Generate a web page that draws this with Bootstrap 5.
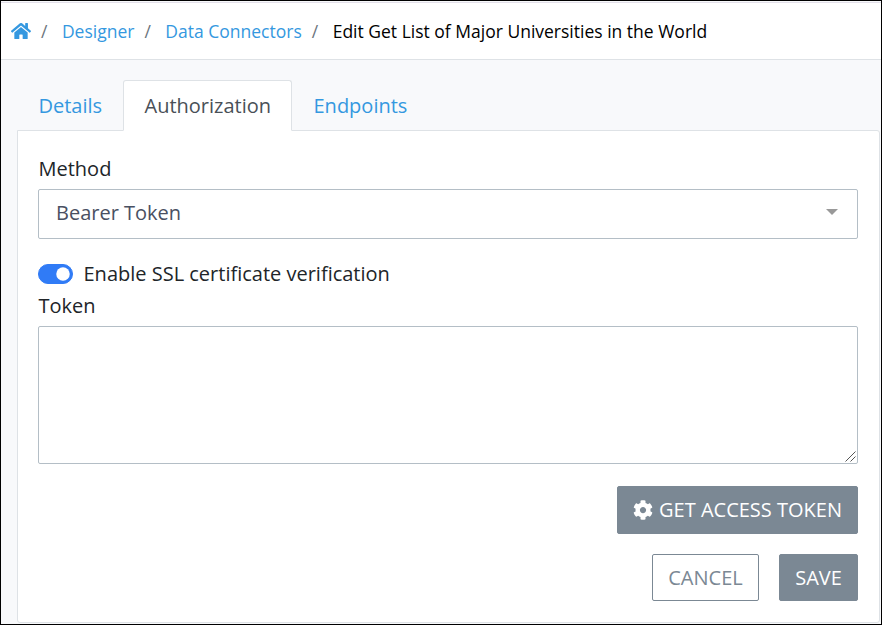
<!DOCTYPE html>
<html lang="en">
<head>
<meta charset="utf-8">
<meta name="viewport" content="width=device-width, initial-scale=1">
<title>Edit Data Connector</title>
<link href="https://cdn.jsdelivr.net/npm/bootstrap@5.3.0/dist/css/bootstrap.min.css" rel="stylesheet">
<style>
body{font-family:"Open Sans","Noto Sans",sans-serif;font-size:20px;line-height:30px;color:#212529;background:#f8f9fb;height:625px;border:1px solid #000;overflow:hidden}
a{color:#3498e0;text-decoration:none}
.topbar{border-top:1px solid #e3e0ea;border-bottom:1px solid #dee2e6;margin-top:1px;padding-left:10px;height:58px}
.breadcrumb{font-size:17.5px;line-height:27px;--bs-breadcrumb-item-padding-x:10px;--bs-breadcrumb-divider-color:#6c757d}
.breadcrumb-item+.breadcrumb-item::before{padding-right:14.5px}
.breadcrumb-item.active{color:#000}
.home-icon{width:20px;height:16px;display:block;margin-top:5px}
.workspace{padding:20px 1px 0 16px}
.nav-tabs{--bs-nav-tabs-border-color:#dee2e6;--bs-nav-tabs-border-radius:3px;--bs-nav-link-color:#3498e0;--bs-nav-tabs-link-active-color:#495057;--bs-nav-link-padding-x:20.5px;border-bottom:0;height:50px}
.nav-tabs .nav-link{height:51px;padding-top:10px;margin-bottom:-1px;position:relative}
.nav-tabs .nav-item:nth-child(1){width:106px}
.nav-tabs .nav-item:nth-child(2){width:169px}
.panel{height:493px;border:1px solid #dee2e6;border-radius:0 3px 3px 3px;background:#fff;padding:23px 21px 0 20px}
.field-label{padding-left:.5px}
.form-select,.form-control{border:1px solid #b4bec6;border-radius:2px;font-size:20px;line-height:30px}
.form-select{height:50px;padding:7px 17px 9px;color:#495062;background-image:none}
.select-wrap{margin:5px 0 20px}
.select-wrap::after{content:"";position:absolute;right:20px;top:20px;border:6px solid transparent;border-top-color:#999;border-bottom:0}
.form-check.form-switch{min-height:30px;padding:0;gap:10.5px;margin-bottom:2px}
.form-switch .form-check-input{width:35px;height:20px;margin:0 0 1px;float:none}
.form-check-input:checked{background-color:#307bf6;border-color:#307bf6}
.token-wrap{margin-top:5px}
.token-box{height:138px;resize:none;display:block}
.grip{position:absolute;right:2px;bottom:2px;pointer-events:none}
.btn{font-size:20px;line-height:30px;border-radius:2px;padding:7px 15px;white-space:nowrap}
.btn-slate{background:#7b8894;border-color:#7b8894;color:#fff}
.btn-line{border-color:#7b8894;color:#7b8894;background:#fff}
.get{width:241px;height:48px}
.gear{margin-right:6px}
.cancel{width:107px;height:47px}
.save{width:79px;height:47px}
.actions-first{margin-top:22px}
.actions-last{margin-top:20px;gap:20px}
</style>
<script src="https://cdn.jsdelivr.net/npm/bootstrap@5.3.0/dist/js/bootstrap.bundle.min.js"></script>
</head>
<body>
<header class="topbar bg-white d-flex align-items-center">
  <nav aria-label="breadcrumb">
    <ol class="breadcrumb mb-0">
      <li class="breadcrumb-item"><a href="#" aria-label="Home"><svg class="home-icon" viewBox="0 0 576 448" preserveAspectRatio="none" fill="currentColor"><path d="M280 116 96 268v164a16 16 0 0 0 16 16h112a16 16 0 0 0 16-16v-96a16 16 0 0 1 16-16h64a16 16 0 0 1 16 16v96a16 16 0 0 0 16 16h112a16 16 0 0 0 16-16V268L295 116a12 12 0 0 0-15 0zM571 219l-83-69V12a12 12 0 0 0-12-12h-56a12 12 0 0 0-12 12v72l-89-74a48 48 0 0 0-61 0L4 219a12 12 0 0 0-2 17l26 31a12 12 0 0 0 17 2L280 76a12 12 0 0 1 15 0l235 193a12 12 0 0 0 17-2l26-31a12 12 0 0 0-2-17z"/></svg></a></li>
      <li class="breadcrumb-item"><a href="#">Designer</a></li>
      <li class="breadcrumb-item"><a href="#">Data Connectors</a></li>
      <li class="breadcrumb-item active" aria-current="page">Edit Get List of Major Universities in the World</li>
    </ol>
  </nav>
</header>
<main class="workspace">
  <ul class="nav nav-tabs flex-nowrap">
    <li class="nav-item"><a class="nav-link" href="#">Details</a></li>
    <li class="nav-item"><a class="nav-link active" href="#">Authorization</a></li>
    <li class="nav-item"><a class="nav-link" href="#">Endpoints</a></li>
  </ul>
  <form class="panel">
    <label class="field-label d-block" for="method">Method</label>
    <div class="select-wrap position-relative">
      <select class="form-select" id="method"><option>Bearer Token</option></select>
    </div>
    <div class="form-check form-switch d-flex align-items-center">
      <input class="form-check-input" type="checkbox" role="switch" id="ssl" checked>
      <label class="form-check-label" for="ssl">Enable SSL certificate verification</label>
    </div>
    <label class="field-label d-block" for="token">Token</label>
    <div class="token-wrap position-relative">
      <textarea class="form-control token-box" id="token"></textarea>
      <svg class="grip" width="11" height="11" viewBox="0 0 11 11" stroke="#555" fill="none"><path d="M.5 10.500 10.500.5M5.500 10.500l5-5"/></svg>
    </div>
    <div class="actions-first d-flex justify-content-end">
      <button type="button" class="btn btn-slate get d-flex align-items-center justify-content-center"><svg width="20" height="20" class="gear" viewBox="0 0 512 512" fill="currentColor"><path d="M487.400 315.700l-42.600-24.600c4.300-23.200 4.300-47 0-70.200l42.600-24.600c4.900-2.800 7.100-8.600 5.500-14-11.100-35.600-30-67.800-54.700-94.600-3.800-4.100-10-5.100-14.800-2.300L380.800 110c-17.900-15.400-38.500-27.300-60.800-35.100V25.800c0-5.600-3.900-10.500-9.400-11.700-36.700-8.200-74.300-7.800-109.200 0-5.500 1.200-9.400 6.100-9.400 11.700V75c-22.200 7.900-42.800 19.800-60.800 35.100L88.700 85.500c-4.900-2.800-11-1.900-14.800 2.300-24.700 26.700-43.600 58.900-54.700 94.600-1.700 5.400.6 11.200 5.500 14L67.300 221c-4.300 23.200-4.300 47 0 70.200l-42.600 24.600c-4.900 2.800-7.100 8.600-5.500 14 11.100 35.600 30 67.800 54.700 94.600 3.800 4.100 10 5.100 14.800 2.300l42.600-24.600c17.900 15.400 38.500 27.300 60.800 35.100v49.200c0 5.600 3.900 10.500 9.400 11.700 36.700 8.200 74.300 7.800 109.200 0 5.500-1.200 9.400-6.100 9.400-11.700v-49.200c22.200-7.900 42.800-19.800 60.800-35.100l42.600 24.600c4.900 2.800 11 1.900 14.800-2.300 24.700-26.700 43.600-58.900 54.700-94.600 1.500-5.500-.7-11.300-5.600-14.100zM256 336c-44.100 0-80-35.900-80-80s35.900-80 80-80 80 35.900 80 80-35.900 80-80 80z"/></svg>GET ACCESS TOKEN</button>
    </div>
    <div class="actions-last d-flex justify-content-end">
      <button type="button" class="btn btn-line cancel">CANCEL</button>
      <button type="submit" class="btn btn-slate save">SAVE</button>
    </div>
  </form>
</main>
</body>
</html>
